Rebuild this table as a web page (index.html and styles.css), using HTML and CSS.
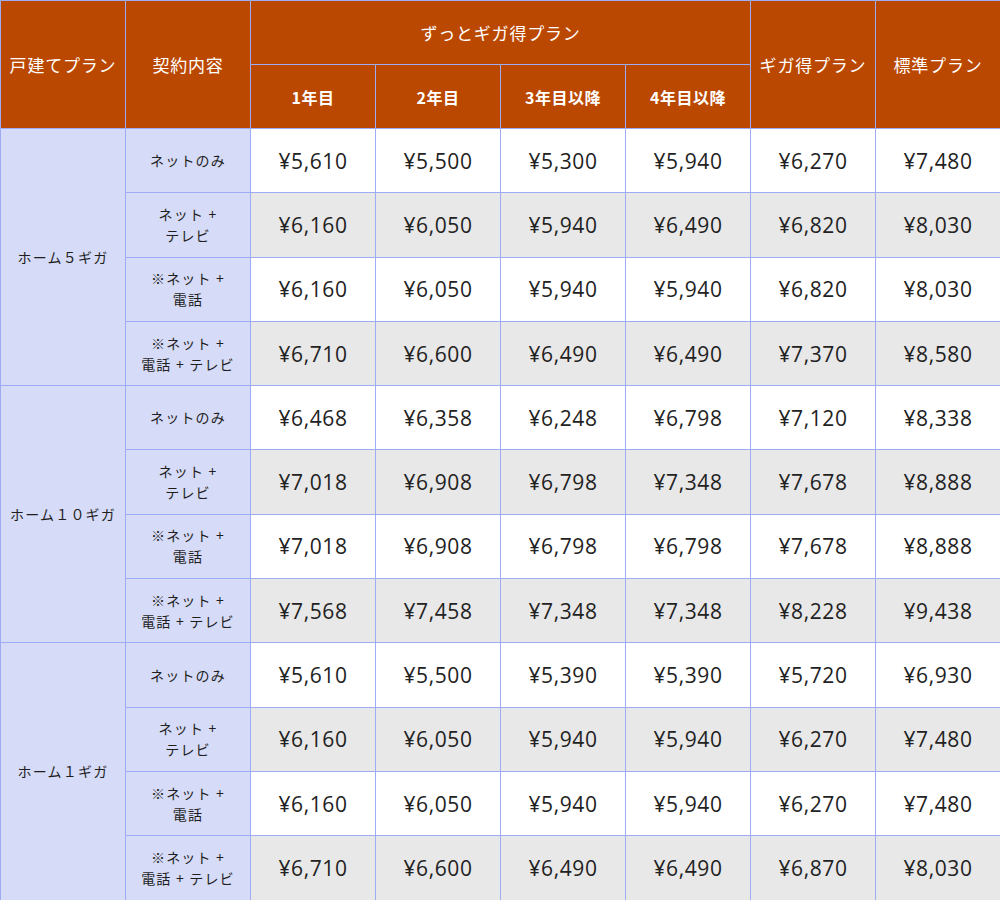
FILE: index.html
```html
<!DOCTYPE html>
<html lang="ja">
<head>
<meta charset="utf-8">
<link rel="stylesheet" href="styles.css">
</head>
<body>
<table class="price-table">
  <colgroup>
    <col><col><col><col><col><col><col><col>
  </colgroup>
  <thead>
    <tr class="head-row">
      <th rowspan="2">戸建てプラン</th>
      <th rowspan="2">契約内容</th>
      <th colspan="4">ずっとギガ得プラン</th>
      <th rowspan="2">ギガ得プラン</th>
      <th rowspan="2">標準プラン</th>
    </tr>
    <tr class="head-row">
      <th class="year">1年目</th>
      <th class="year">2年目</th>
      <th class="year">3年目以降</th>
      <th class="year">4年目以降</th>
    </tr>
  </thead>
  <tbody>
    <tr class="odd">
      <td rowspan="4" class="plan">ホーム５ギガ</td>
      <td class="label">ネットのみ</td>
      <td>¥5,610</td><td>¥5,500</td><td>¥5,300</td><td>¥5,940</td><td>¥6,270</td><td>¥7,480</td>
    </tr>
    <tr class="even">
      <td class="label">ネット +<br>テレビ</td>
      <td>¥6,160</td><td>¥6,050</td><td>¥5,940</td><td>¥6,490</td><td>¥6,820</td><td>¥8,030</td>
    </tr>
    <tr class="odd">
      <td class="label">※ネット +<br>電話</td>
      <td>¥6,160</td><td>¥6,050</td><td>¥5,940</td><td>¥5,940</td><td>¥6,820</td><td>¥8,030</td>
    </tr>
    <tr class="even">
      <td class="label">※ネット +<br>電話 + テレビ</td>
      <td>¥6,710</td><td>¥6,600</td><td>¥6,490</td><td>¥6,490</td><td>¥7,370</td><td>¥8,580</td>
    </tr>
    <tr class="odd">
      <td rowspan="4" class="plan">ホーム１０ギガ</td>
      <td class="label">ネットのみ</td>
      <td>¥6,468</td><td>¥6,358</td><td>¥6,248</td><td>¥6,798</td><td>¥7,120</td><td>¥8,338</td>
    </tr>
    <tr class="even">
      <td class="label">ネット +<br>テレビ</td>
      <td>¥7,018</td><td>¥6,908</td><td>¥6,798</td><td>¥7,348</td><td>¥7,678</td><td>¥8,888</td>
    </tr>
    <tr class="odd">
      <td class="label">※ネット +<br>電話</td>
      <td>¥7,018</td><td>¥6,908</td><td>¥6,798</td><td>¥6,798</td><td>¥7,678</td><td>¥8,888</td>
    </tr>
    <tr class="even">
      <td class="label">※ネット +<br>電話 + テレビ</td>
      <td>¥7,568</td><td>¥7,458</td><td>¥7,348</td><td>¥7,348</td><td>¥8,228</td><td>¥9,438</td>
    </tr>
    <tr class="odd">
      <td rowspan="4" class="plan">ホーム１ギガ</td>
      <td class="label">ネットのみ</td>
      <td>¥5,610</td><td>¥5,500</td><td>¥5,390</td><td>¥5,390</td><td>¥5,720</td><td>¥6,930</td>
    </tr>
    <tr class="even">
      <td class="label">ネット +<br>テレビ</td>
      <td>¥6,160</td><td>¥6,050</td><td>¥5,940</td><td>¥5,940</td><td>¥6,270</td><td>¥7,480</td>
    </tr>
    <tr class="odd">
      <td class="label">※ネット +<br>電話</td>
      <td>¥6,160</td><td>¥6,050</td><td>¥5,940</td><td>¥5,940</td><td>¥6,270</td><td>¥7,480</td>
    </tr>
    <tr class="even">
      <td class="label">※ネット +<br>電話 + テレビ</td>
      <td>¥6,710</td><td>¥6,600</td><td>¥6,490</td><td>¥6,490</td><td>¥6,870</td><td>¥8,030</td>
    </tr>
  </tbody>
</table>
</body>
</html>
```

FILE: styles.css
```css
html, body {
  margin: 0;
  padding: 0;
  background: #ffffff;
}

.price-table {
  width: 1000px;
  height: 900px;
  border-collapse: collapse;
  table-layout: fixed;
  font-family: "Noto Sans CJK JP", "Noto Sans", sans-serif;
  color: #222222;
}

.price-table col {
  width: 125px;
}

.price-table th,
.price-table td {
  border: 1px solid #9eacf6;
  text-align: center;
  vertical-align: middle;
  padding: 0;
}

.head-row {
  height: 64px;
}

.price-table th {
  background: #bb4800;
  color: #ffffff;
  font-weight: 400;
  font-size: 17px;
  letter-spacing: 0.8px;
}

.price-table th.year {
  font-weight: 700;
  font-size: 16px;
  letter-spacing: 0.5px;
}

.price-table tbody tr {
  height: 64.3px;
}

.price-table tbody td {
  font-family: "Open Sans", "Noto Sans", sans-serif;
  font-size: 21px;
  letter-spacing: 0.6px;
  color: #222222;
}

.odd td {
  background: #ffffff;
}

.even td {
  background: #e8e8e8;
}

.price-table tbody td.plan,
.price-table tbody td.label {
  background: #d6dbf7;
  font-family: "Noto Sans CJK JP", sans-serif;
  font-size: 14px;
  line-height: 21px;
  letter-spacing: 1.2px;
  color: #1e1e1e;
}
```
